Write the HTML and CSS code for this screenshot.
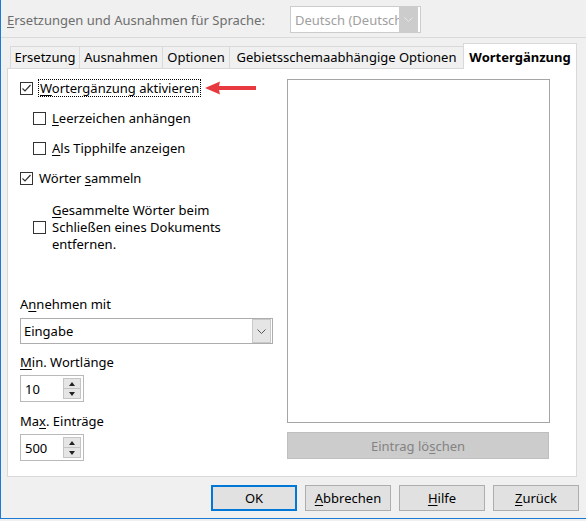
FILE: index.html
```html
<!DOCTYPE html>
<html lang="de">
  <head>
    <meta charset="UTF-8" />
    <title>AutoKorrektur</title>
    <link rel="stylesheet" href="styles.css">
  </head>
  <body>
    <div class="dialog">
      <div class="lang-row">
        <label class="lang-label"><u>E</u>rsetzungen und Ausnahmen für Sprache:</label>
        <div class="combo lang-combo">
          <span class="combo-text">Deutsch (Deutschland)</span>
          <span class="combo-btn">
            <svg width="9" height="5" viewBox="0 0 9 5"><path d="M0.5 0.5 L4.5 4.5 L8.5 0.5" fill="none" stroke="#e6e6e6" /></svg>
          </span>
        </div>
      </div>
      <div class="sep"></div>

      <div class="tabs">
        <div class="tab tab-replace">Ersetzung</div>
        <div class="tab tab-except">Ausnahmen</div>
        <div class="tab tab-options">Optionen</div>
        <div class="tab tab-locale">Gebietsschemaabhängige Optionen</div>
        <div class="tab tab-complete active">Wortergänzung</div>
      </div>

      <div class="panel">
        <div class="col-left">
          <div class="check-row">
            <span class="box">
              <svg width="11" height="11" viewBox="0 0 11 11"><path d="M1.5 5.5 L4 8 L9.5 2" fill="none" stroke="#333" stroke-width="1.2" /></svg>
            </span>
            <span class="focus"><u>W</u>ortergänzung aktivieren</span>
            <svg class="arrow" width="52" height="14" viewBox="0 0 52 14">
              <path d="M0 7 L15 0.5 L14 5 L51 5 L51 9 L14 9 L15 13.5 Z" fill="#e8393f" />
            </svg>
          </div>
          <div class="check-row sub">
            <span class="box"></span>
            <span class="check-label"><u>L</u>eerzeichen anhängen</span>
          </div>
          <div class="check-row sub">
            <span class="box"></span>
            <span class="check-label"><u>A</u>ls Tipphilfe anzeigen</span>
          </div>
          <div class="check-row">
            <span class="box">
              <svg width="11" height="11" viewBox="0 0 11 11"><path d="M1.5 5.5 L4 8 L9.5 2" fill="none" stroke="#333" stroke-width="1.2" /></svg>
            </span>
            <span class="check-label">Wörter <u>s</u>ammeln</span>
          </div>
          <div class="check-row sub multi">
            <span class="box"></span>
            <span class="check-label"><u>G</u>esammelte Wörter beim<br>Schließen eines Dokuments<br>entfernen.</span>
          </div>

          <div class="field-label accept">A<u>n</u>nehmen mit</div>
          <div class="combo accept-combo">
            <span class="combo-text">Eingabe</span>
            <span class="combo-btn">
              <svg width="9" height="5" viewBox="0 0 9 5"><path d="M0.5 0.5 L4.5 4.5 L8.5 0.5" fill="none" stroke="#555" /></svg>
            </span>
          </div>

          <div class="field-label"><u>M</u>in. Wortlänge</div>
          <div class="spin">
            <span class="spin-value">10</span>
            <span class="spin-btns">
              <span class="spin-up"></span>
              <span class="spin-down"></span>
            </span>
          </div>

          <div class="field-label">Ma<u>x</u>. Einträge</div>
          <div class="spin">
            <span class="spin-value">500</span>
            <span class="spin-btns">
              <span class="spin-up"></span>
              <span class="spin-down"></span>
            </span>
          </div>
        </div>

        <div class="col-right">
          <div class="listbox"></div>
          <button class="btn btn-wide" disabled>Eintrag lö<u>s</u>chen</button>
        </div>
      </div>

      <div class="footer">
        <button class="btn btn-default">OK</button>
        <button class="btn"><u>A</u>bbrechen</button>
        <button class="btn"><u>H</u>ilfe</button>
        <button class="btn"><u>Z</u>urück</button>
      </div>
    </div>
  </body>
</html>
```

FILE: styles.css
```css
body {
  margin: 0;
  background: #f0f0f0;
  font-family: "Noto Sans", sans-serif;
  font-size: 13px;
  color: #000;
}

.dialog {
  width: 585px;
  height: 518px;
  border-left: 1px solid #1a7ad4;
  border-bottom: 1px solid #1a7ad4;
  background: #f0f0f0;
}

u {
  text-decoration-thickness: 1px;
  text-underline-offset: 2px;
}

/* language selector */

.lang-row {
  display: flex;
  align-items: center;
  height: 27px;
  padding: 6px 0 0 6px;
}

.lang-label {
  width: 283px;
  color: #6d6d6d;
}

.combo {
  display: flex;
  align-items: center;
  box-sizing: border-box;
  background: white;
  border: 1px solid #adadad;
}

.combo-text {
  flex: 1;
  overflow: hidden;
  white-space: nowrap;
  padding-left: 3px;
}

.combo-btn {
  display: flex;
  align-items: center;
  justify-content: center;
  box-sizing: border-box;
  width: 19px;
  height: 24px;
  margin-right: 1px;
  background: #e5e5e5;
  border: 1px solid #c9c9c9;
}

.lang-combo {
  width: 131px;
  height: 27px;
  border-color: #cccccc;
  color: #a0a0a0;
}

.lang-combo .combo-text {
  padding-left: 4px;
}

.lang-combo .combo-btn {
  height: 25px;
  margin-right: 2px;
  background: #cccccc;
  border: none;
}

.sep {
  margin-top: 4px;
  border-top: 1px solid #dadada;
}

/* tabs */

.tabs {
  display: flex;
  align-items: flex-end;
  height: 25px;
  margin-top: 5px;
  padding-left: 9px;
}

.tab {
  box-sizing: border-box;
  height: 22px;
  line-height: 21px;
  margin-right: -1px;
  text-align: center;
  white-space: nowrap;
  border: 1px solid #d9d9d9;
  border-bottom: none;
  background: #f0f0f0;
}

.tab-replace { width: 70px; }
.tab-except { width: 84px; }
.tab-options { width: 68px; }
.tab-locale { width: 235px; }
.tab-complete { width: 114px; }

.tab.active {
  position: relative;
  height: 26px;
  line-height: 26px;
  margin-bottom: -1px;
  background: white;
  font-weight: bold;
}

/* panel */

.panel {
  display: flex;
  box-sizing: border-box;
  width: 570px;
  height: 409px;
  margin-left: 6px;
  padding: 10px 0 0 12px;
  border: 1px solid #d9d9d9;
  background: white;
}

.col-left {
  width: 267px;
}

.check-row {
  display: flex;
  align-items: center;
  height: 18px;
  margin-bottom: 12px;
}

.check-row.sub {
  padding-left: 13px;
}

.check-row.multi {
  height: 51px;
  margin-top: 15px;
  line-height: 17px;
}

.box {
  display: flex;
  align-items: center;
  justify-content: center;
  flex-shrink: 0;
  box-sizing: border-box;
  width: 13px;
  height: 13px;
  margin-right: 6px;
  border: 1px solid #333;
  background: white;
}

.focus {
  margin-left: -1px;
  padding: 0 1px;
  line-height: 16px;
  border: 1px dotted #000;
}

.arrow {
  margin-left: 4px;
}

.field-label {
  height: 18px;
  line-height: 18px;
  margin-bottom: 4px;
}

.field-label.accept {
  margin-top: 42px;
  margin-bottom: 5px;
}

.accept-combo {
  width: 253px;
  height: 26px;
  margin-bottom: 9px;
}

.spin {
  display: flex;
  align-items: center;
  box-sizing: border-box;
  width: 64px;
  height: 27px;
  margin-bottom: 10px;
  border: 1px solid #b9b9b9;
  background: white;
}

.spin-value {
  flex: 1;
  padding-left: 4px;
}

.spin-btns {
  display: flex;
  flex-direction: column;
  box-sizing: border-box;
  width: 18px;
  height: 21px;
  margin-right: 2px;
  border: 1px solid #c4c4c4;
  background: #e5e5e5;
}

.spin-up,
.spin-down {
  flex: 1;
  position: relative;
}

.spin-up {
  border-bottom: 1px solid #c4c4c4;
}

.spin-up::after,
.spin-down::after {
  content: "";
  position: absolute;
  left: 5px;
  top: 3px;
  border-left: 3px solid transparent;
  border-right: 3px solid transparent;
}

.spin-up::after {
  border-bottom: 4px solid #222;
}

.spin-down::after {
  border-top: 4px solid #222;
}

.col-right {
  display: flex;
  flex-direction: column;
}

.listbox {
  box-sizing: border-box;
  width: 263px;
  height: 344px;
  border: 1px solid #a5a5a5;
  background: white;
}

/* buttons */

.btn {
  box-sizing: border-box;
  height: 26px;
  padding: 0;
  font-family: inherit;
  font-size: 13px;
  color: #000;
  background: #e1e1e1;
  border: 1px solid #adadad;
}

.btn-wide {
  width: 262px;
  height: 27px;
  margin-top: 9px;
  background: #cccccc;
  border-color: #bfbfbf;
  color: #838383;
}

.btn-default {
  border: 2px solid #0078d7;
}

.footer {
  display: flex;
  justify-content: flex-end;
  gap: 8px;
  margin-top: 8px;
  padding-right: 7px;
}

.footer .btn {
  width: 86px;
}
```
